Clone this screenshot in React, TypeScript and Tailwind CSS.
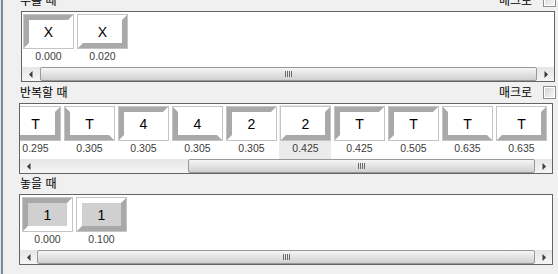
import React from 'react';

type Bevel = 'tl' | 'br' | 'bl';

interface KeyItem {
  label: string;
  value: string;
  bevel: Bevel;
  grey?: boolean;
  active?: boolean;
}

const PRESS_ROW: KeyItem[] = [
  { label: 'X', value: '0.000', bevel: 'tl' },
  { label: 'X', value: '0.020', bevel: 'br' },
];

const REPEAT_ROW: KeyItem[] = [
  { label: 'T', value: '0.295', bevel: 'br' },
  { label: 'T', value: '0.305', bevel: 'bl' },
  { label: '4', value: '0.305', bevel: 'tl' },
  { label: '4', value: '0.305', bevel: 'bl' },
  { label: '2', value: '0.305', bevel: 'tl' },
  { label: '2', value: '0.425', bevel: 'br', active: true },
  { label: 'T', value: '0.425', bevel: 'tl' },
  { label: 'T', value: '0.505', bevel: 'tl' },
  { label: 'T', value: '0.635', bevel: 'bl' },
  { label: 'T', value: '0.635', bevel: 'br' },
];

const RELEASE_ROW: KeyItem[] = [
  { label: '1', value: '0.000', bevel: 'tl', grey: true },
  { label: '1', value: '0.100', bevel: 'br', grey: true },
];

// bevel colours per side: grey where the key looks shaded
const bevelClass: Record<Bevel, string> = {
  tl: 'border-t-[#a9a9a9] border-l-[#a9a9a9] border-r-white border-b-white',
  br: 'border-t-white border-l-white border-r-[#a9a9a9] border-b-[#a9a9a9]',
  bl: 'border-t-white border-l-[#a9a9a9] border-r-white border-b-[#a9a9a9]',
};

const KeyCell: React.FC<{ item: KeyItem }> = ({ item }) => (
  <div className={`flex h-[54px] w-[52px] shrink-0 flex-col pt-[1px] ${item.active ? 'bg-[#ebebeb]' : ''}`}>
    <div className="ml-[1px] h-[35px] w-[51px] border border-[#c4c4c4]">
      <div className={`h-full w-full border-[5px] border-solid ${bevelClass[item.bevel]}`}>
        <div
          className={`flex h-full w-full items-center justify-center text-[14px] leading-none text-black ${
            item.grey ? 'bg-[#d0d0d0]' : 'bg-white'
          }`}
        >
          {item.label}
        </div>
      </div>
    </div>
    <div className="flex h-[16px] items-center justify-center pl-[1px] text-[10.5px] text-[#3c3c3c]">{item.value}</div>
  </div>
);

const ScrollBar: React.FC<{ track: string }> = ({ track }) => (
  <div className="flex h-[14px] bg-linear-to-b from-[#e6e6e6] to-[#f5f5f5]">
    <div className="flex w-[17px] shrink-0 items-center justify-center">
      <svg width="4" height="7" viewBox="0 0 4 7">
        <polygon points="3.5,0 0,3.5 3.5,7" fill="#3a3a3a" />
      </svg>
    </div>
    <div className={`shrink-0 ${track}`} />
    <div className="flex flex-1 items-center justify-center gap-[1px] rounded-[2px] border border-[#999999] bg-linear-to-b from-[#f6f6f6] to-[#d0d0d0]">
      <div className="h-[6px] w-[1px] bg-[#6b6b6b]" />
      <div className="h-[6px] w-[1px] bg-[#6b6b6b]" />
      <div className="h-[6px] w-[1px] bg-[#6b6b6b]" />
      <div className="h-[6px] w-[1px] bg-[#6b6b6b]" />
    </div>
    <div className="flex w-[17px] shrink-0 items-center justify-center">
      <svg width="4" height="7" viewBox="0 0 4 7">
        <polygon points="0.5,0 4,3.5 0.5,7" fill="#3a3a3a" />
      </svg>
    </div>
  </div>
);

const CheckBox = () => (
  <div className="h-[13px] w-[13px] border border-[#8e8f8f] bg-white p-[1px]">
    <div className="h-full w-full bg-linear-to-br from-[#d6d6d6] to-[#f6f6f6]" />
  </div>
);

interface SectionProps {
  title: string;
  macro?: boolean;
  items: KeyItem[];
  headerH: string;
  panelBox: string;
  shift: string;
  track: string;
}

const Section: React.FC<SectionProps> = ({ title, macro, items, headerH, panelBox, shift, track }) => (
  <div>
    <div className={`flex items-center justify-between pl-[17px] pr-[2px] ${headerH}`}>
      <span className="text-[12px] leading-none text-black">{title}</span>
      {macro && (
        <div className="flex items-center gap-[11px]">
          <span className="text-[12px] leading-none text-black">매크로</span>
          <CheckBox />
        </div>
      )}
    </div>
    <div className={`flex h-[71px] flex-col border border-[#646464] bg-white ${panelBox}`}>
      <div className="h-[55px] overflow-hidden pt-[1px]">
        <div className={`flex gap-[2px] ${shift}`}>
          {items.map((item, i) => (
            <KeyCell key={i} item={item} />
          ))}
        </div>
      </div>
      <ScrollBar track={track} />
    </div>
  </div>
);

export default function App() {
  return (
    <div
      className="flex h-[274px] w-[558px] overflow-hidden bg-[#f0f0f0]"
      style={{ fontFamily: '"Liberation Sans", "Noto Sans CJK KR", Arial, sans-serif' }}
    >
      <div className="flex w-[3px] shrink-0">
        <div className="w-[1px] bg-[#dfe4ea]" />
        <div className="w-[2px] bg-[#7d8a99]" />
      </div>
      <div className="-mt-[10px] flex-1">
        <Section
          title="누를 때"
          macro
          items={PRESS_ROW}
          headerH="h-[21px]"
          panelBox="ml-[18px] w-[534px]"
          shift="ml-0"
          track="w-[1px]"
        />
        <Section
          title="반복할 때"
          macro
          items={REPEAT_ROW}
          headerH="h-[21px]"
          panelBox="ml-[16px] w-[534px]"
          shift="-ml-[11px]"
          track="w-[151px]"
        />
        <Section
          title="놓을 때"
          items={RELEASE_ROW}
          headerH="h-[20px]"
          panelBox="ml-[16px] w-[534px]"
          shift="ml-[1px]"
          track="w-0"
        />
      </div>
    </div>
  );
}
